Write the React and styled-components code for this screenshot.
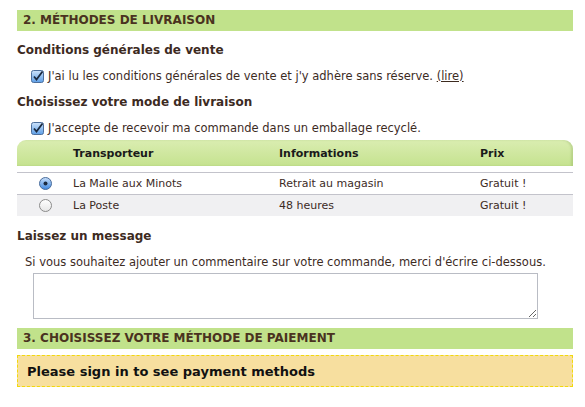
import styled, { createGlobalStyle } from "styled-components";

const GlobalStyle = createGlobalStyle`
  body {
    margin: 0;
    background: #ffffff;
    font-family: "DejaVu Sans", Verdana, sans-serif;
    color: #3d2b1f;
  }
`;

const Page = styled.div`
  width: 556px;
  padding: 10px 0 0 17px;
  font-size: 11px;
`;

const SectionHeader = styled.h2`
  margin: ${(p) => p.$top || 0}px 0 0;
  height: 21px;
  line-height: 21px;
  padding-left: 6px;
  background: #c1e28b;
  color: #4a3220;
  font-size: 12px;
  font-weight: bold;
  text-transform: uppercase;
`;

const SubTitle = styled.h3`
  margin: ${(p) => p.$top || 10}px 0 0;
  line-height: 16px;
  font-size: 12px;
  font-weight: bold;
  color: #3d2b1f;
`;

const CheckRow = styled.label`
  display: flex;
  align-items: center;
  gap: 4px;
  margin-top: 10px;
  padding-left: 14px;
  line-height: 16px;
  font-size: 11.5px;
`;

const ReadLink = styled.a`
  color: #3d2b1f;
  text-decoration: underline;
`;

const Table = styled.div`
  margin-top: 4px;
`;

const Row = styled.div`
  display: grid;
  grid-template-columns: 56px 206px 201px 1fr;
  align-items: center;
  height: ${(p) => (p.$head ? 26 : 21)}px;
  background: ${(p) => (p.$alt ? "#f0f0f2" : "#ffffff")};
  border-top: ${(p) => (p.$head ? "none" : "1px solid #c3c3cb")};
`;

const HeadRow = styled(Row)`
  background: linear-gradient(#daedb1, #c5e28f);
  border-radius: 9px 9px 0 0;
  margin-bottom: 6px;
  font-weight: bold;
  color: #1a1a1a;
  box-shadow: inset -2px 0 2px rgba(120, 150, 70, 0.25);
`;

const Cell = styled.div`
  display: flex;
  justify-content: ${(p) => (p.$center ? "center" : "flex-start")};
`;

const Hint = styled.p`
  margin: 10px 0 0;
  padding-left: 8px;
  line-height: 16px;
  font-size: 11.5px;
`;

const MessageBox = styled.textarea`
  display: block;
  box-sizing: border-box;
  margin: 3px 0 0 16px;
  width: 505px;
  height: 46px;
  border: 1px solid #b9bcc4;
  resize: both;
`;

const Notice = styled.div`
  box-sizing: border-box;
  margin-top: 6px;
  height: 32px;
  padding-left: 9px;
  display: flex;
  align-items: center;
  background: #f7df9f;
  border: 1px dashed #f2d90c;
  color: #111111;
  font-size: 13px;
  font-weight: bold;
`;

function CheckBox() {
  return (
    <svg width="13" height="13" viewBox="0 0 13 13">
      <defs>
        <linearGradient id="cb" x1="0" y1="0" x2="0" y2="1">
          <stop offset="0" stopColor="#cde3fb" />
          <stop offset="1" stopColor="#5d9ee6" />
        </linearGradient>
      </defs>
      <rect x="0.5" y="0.5" width="12" height="12" rx="2" fill="url(#cb)" stroke="#4d6f9c" />
      <path d="M3 6.5 L5.5 9.5 L11.5 1.5" fill="none" stroke="#1b2a40" strokeWidth="1.8" />
    </svg>
  );
}

function Radio({ checked }) {
  return (
    <svg width="13" height="13" viewBox="0 0 13 13">
      <defs>
        <linearGradient id="rb" x1="0" y1="0" x2="0" y2="1">
          <stop offset="0" stopColor="#c9e0fa" />
          <stop offset="1" stopColor="#3f87e0" />
        </linearGradient>
        <linearGradient id="rg" x1="0" y1="0" x2="0" y2="1">
          <stop offset="0" stopColor="#ffffff" />
          <stop offset="1" stopColor="#e6e6e6" />
        </linearGradient>
      </defs>
      <circle
        cx="6.5"
        cy="6.5"
        r="6"
        fill={checked ? "url(#rb)" : "url(#rg)"}
        stroke={checked ? "#4a6c9a" : "#8a8a8a"}
      />
      {checked && <circle cx="6.5" cy="6.5" r="2" fill="#1c2a3e" />}
    </svg>
  );
}

const carriers = [
  { name: "La Malle aux Minots", info: "Retrait au magasin", price: "Gratuit !", checked: true },
  { name: "La Poste", info: "48 heures", price: "Gratuit !", checked: false },
];

export default function App() {
  return (
    <Page>
      <GlobalStyle />
      <SectionHeader>2. Méthodes de livraison</SectionHeader>

      <SubTitle $top={11}>Conditions générales de vente</SubTitle>
      <CheckRow>
        <CheckBox />
        <span>
          J'ai lu les conditions générales de vente et j'y adhère sans réserve.{" "}
          <ReadLink href="#">(lire)</ReadLink>
        </span>
      </CheckRow>

      <SubTitle>Choisissez votre mode de livraison</SubTitle>
      <CheckRow>
        <CheckBox />
        <span>J'accepte de recevoir ma commande dans un emballage recyclé.</span>
      </CheckRow>

      <Table>
        <HeadRow $head>
          <Cell />
          <Cell>Transporteur</Cell>
          <Cell>Informations</Cell>
          <Cell>Prix</Cell>
        </HeadRow>
        {carriers.map((c, i) => (
          <Row key={c.name} $alt={i % 2 === 1}>
            <Cell $center>
              <Radio checked={c.checked} />
            </Cell>
            <Cell>{c.name}</Cell>
            <Cell>{c.info}</Cell>
            <Cell>{c.price}</Cell>
          </Row>
        ))}
      </Table>

      <SubTitle $top={12}>Laissez un message</SubTitle>
      <Hint>Si vous souhaitez ajouter un commentaire sur votre commande, merci d'écrire ci-dessous.</Hint>
      <MessageBox />

      <SectionHeader $top={9}>3. Choisissez votre méthode de paiement</SectionHeader>
      <Notice>Please sign in to see payment methods</Notice>
    </Page>
  );
}
